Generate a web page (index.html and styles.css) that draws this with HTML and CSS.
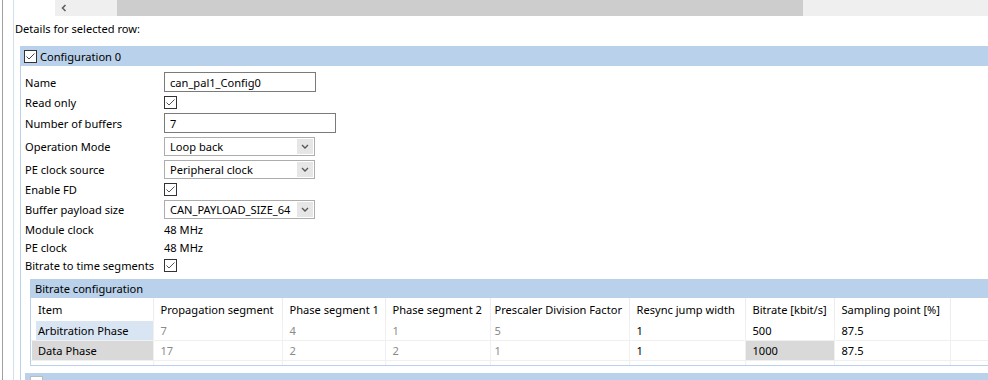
FILE: index.html
```html
<!DOCTYPE html>
<html lang="en">
<head>
    <meta charset="UTF-8">
    <title>Configuration details</title>
    <link rel="stylesheet" href="styles.css">
</head>
<body>
<div class="frame">
    <div class="pane">

        <!-- horizontal scrollbar of the table above -->
        <div class="hscroll">
            <div class="scroll-btn">
                <svg width="8" height="8" viewBox="0 0 8 8"><path d="M5.5 1 L2.5 4 L5.5 7" fill="none" stroke="#606060" stroke-width="1.6"/></svg>
            </div>
            <div class="thumb"></div>
        </div>

        <div class="caption">Details for selected row:</div>

        <div class="group">
            <div class="group-head">
                <svg class="cb" width="13" height="13" viewBox="0 0 13 13"><rect x="0.5" y="0.5" width="12" height="12" fill="#fff" stroke="#333"/><path d="M2.5 6.5 L5 9 L10.5 3.5" fill="none" stroke="#444"/></svg>
                <span>Configuration 0</span>
            </div>
            <div class="group-body">

                <!-- Settings -->
                <div class="form">
                    <div class="row">
                        <label>Name</label>
                        <div class="textbox w152">can_pal1_Config0</div>
                    </div>
                    <div class="row">
                        <label>Read only</label>
                        <svg class="cb" width="13" height="13" viewBox="0 0 13 13"><rect x="0.5" y="0.5" width="12" height="12" fill="#fff" stroke="#333"/><path d="M2.5 6.5 L5 9 L10.5 3.5" fill="none" stroke="#555"/></svg>
                    </div>
                    <div class="row">
                        <label>Number of buffers</label>
                        <div class="textbox w172">7</div>
                    </div>
                    <div class="row">
                        <label>Operation Mode</label>
                        <div class="combo"><span>Loop back</span><span class="drop"><svg width="8" height="5" viewBox="0 0 8 5"><path d="M1 1 L4 4 L7 1" fill="none" stroke="#555" stroke-width="1.3"/></svg></span></div>
                    </div>
                    <div class="row">
                        <label>PE clock source</label>
                        <div class="combo"><span>Peripheral clock</span><span class="drop"><svg width="8" height="5" viewBox="0 0 8 5"><path d="M1 1 L4 4 L7 1" fill="none" stroke="#555" stroke-width="1.3"/></svg></span></div>
                    </div>
                    <div class="row">
                        <label>Enable FD</label>
                        <svg class="cb" width="13" height="13" viewBox="0 0 13 13"><rect x="0.5" y="0.5" width="12" height="12" fill="#fff" stroke="#333"/><path d="M2.5 6.5 L5 9 L10.5 3.5" fill="none" stroke="#555"/></svg>
                    </div>
                    <div class="row">
                        <label>Buffer payload size</label>
                        <div class="combo"><span>CAN_PAYLOAD_SIZE_64</span><span class="drop"><svg width="8" height="5" viewBox="0 0 8 5"><path d="M1 1 L4 4 L7 1" fill="none" stroke="#555" stroke-width="1.3"/></svg></span></div>
                    </div>
                    <div class="row info">
                        <label>Module clock</label>
                        <span>48 MHz</span>
                    </div>
                    <div class="row info">
                        <label>PE clock</label>
                        <span>48 MHz</span>
                    </div>
                    <div class="row">
                        <label>Bitrate to time segments</label>
                        <svg class="cb" width="13" height="13" viewBox="0 0 13 13"><rect x="0.5" y="0.5" width="12" height="12" fill="#fff" stroke="#333"/><path d="M2.5 6.5 L5 9 L10.5 3.5" fill="none" stroke="#555"/></svg>
                    </div>
                </div>

                <!-- Bitrate table -->
                <div class="subgroup">
                    <div class="sub-head">Bitrate configuration</div>
                    <table class="grid">
                        <colgroup>
                            <col style="width:122px">
                            <col style="width:129px">
                            <col style="width:103px">
                            <col style="width:105px">
                            <col style="width:139px">
                            <col style="width:116px">
                            <col style="width:89px">
                            <col style="width:116px">
                            <col>
                        </colgroup>
                        <thead>
                            <tr>
                                <th class="item">Item</th>
                                <th>Propagation segment</th>
                                <th>Phase segment 1</th>
                                <th>Phase segment 2</th>
                                <th class="tight">Prescaler Division Factor</th>
                                <th>Resync jump width</th>
                                <th>Bitrate [kbit/s]</th>
                                <th>Sampling point [%]</th>
                                <th class="fill"></th>
                            </tr>
                        </thead>
                        <tbody>
                            <tr>
                                <td class="item"><span class="hl">Arbitration Phase</span></td>
                                <td class="ro">7</td>
                                <td class="ro">4</td>
                                <td class="ro">1</td>
                                <td class="ro tight">5</td>
                                <td>1</td>
                                <td>500</td>
                                <td>87.5</td>
                                <td class="fill"></td>
                            </tr>
                            <tr>
                                <td class="item"><span class="sel">Data Phase</span></td>
                                <td class="ro">17</td>
                                <td class="ro">2</td>
                                <td class="ro">2</td>
                                <td class="ro tight">1</td>
                                <td>1</td>
                                <td class="cur">1000</td>
                                <td>87.5</td>
                                <td class="fill"></td>
                            </tr>
                            <tr class="stub">
                                <td></td><td></td><td></td><td></td><td></td><td></td><td></td><td></td><td class="fill"></td>
                            </tr>
                        </tbody>
                    </table>
                </div>

                <div class="next-head">
                    <svg class="cb" width="13" height="13" viewBox="0 0 13 13"><rect x="0.5" y="0.5" width="12" height="12" fill="#fff" stroke="#bbb"/></svg>
                    <span>Enable RxFIFO extension</span>
                </div>

            </div>
        </div>
    </div>
</div>
</body>
</html>
```

FILE: styles.css
```css
/* Page */
body {
    margin: 0;
    font-family: "Noto Sans", "Open Sans", sans-serif;
    font-size: 11.1px;
    color: #000;
    background: #fff;
    height: 380px;
    overflow: hidden;
}

.frame {
    margin-left: 2px;
    border-left: 1px solid #a0a0a0;
    padding-left: 10px;
    height: 380px;
}

.pane {
    border-left: 1px solid #cfe0f1;
    height: 100%;
}

/* Scrollbar */
.hscroll {
    margin-left: 41px;
    height: 16px;
    background: #efefef;
    display: flex;
}

.scroll-btn {
    width: 17px;
    display: flex;
    align-items: center;
    justify-content: center;
}

.thumb {
    margin-left: 45px;
    width: 686px;
    background: #cdcdcd;
}

.caption {
    margin-top: 5px;
    padding-left: 1px;
    line-height: 16px;
}

/* Configuration group */
.group {
    margin: 9px 0 0 6px;
    width: 1100px;
}

.group-head {
    height: 20px;
    background: #b9d1ea;
    display: flex;
    align-items: center;
    gap: 3px;
    padding-left: 4px;
}

.cb {
    display: block;
    flex: none;
}

.group-body {
    border-left: 1px solid #b9d1ea;
    padding-left: 4px;
}

.form {
    padding-top: 6px;
}

.row {
    display: flex;
    align-items: center;
    margin-top: 4px;
    height: 13px;
    line-height: 13px;
}

.row:first-child {
    margin-top: 0;
}

.row.info {
    height: 16px;
    margin-top: 2px;
}

.row label {
    width: 139px;
    flex: none;
    white-space: nowrap;
}

.textbox {
    height: 20px;
    flex: none;
    box-sizing: border-box;
    border: 1px solid #7a7a7a;
    padding-left: 5px;
    display: flex;
    align-items: center;
}

.w152 {
    width: 152px;
}

.w172 {
    width: 172px;
}

.combo {
    width: 151px;
    height: 19px;
    flex: none;
    box-sizing: border-box;
    border: 1px solid #adadad;
    padding-left: 5px;
    display: flex;
    align-items: center;
    justify-content: space-between;
    white-space: nowrap;
}

.drop {
    width: 16px;
    height: 15px;
    margin-right: 1px;
    background: #e6e6e6;
    display: flex;
    align-items: center;
    justify-content: center;
}

/* Rows that hold a 20px control */
.row:has(.textbox),
.row:has(.combo) {
    height: 20px;
}

.row:has(.combo) {
    height: 19px;
}

/* Bitrate configuration */
.subgroup {
    margin: 7px 0 0 5px;
    border: 1px solid #b9d1ea;
    border-top: none;
}

.sub-head {
    height: 19px;
    line-height: 19px;
    background: #b9d1ea;
    padding-left: 4px;
}

.grid {
    border-collapse: collapse;
    table-layout: fixed;
    width: 100%;
}

.grid th {
    font-weight: normal;
    text-align: left;
    height: 23px;
    padding: 0 0 0 7px;
    border-right: 1px solid #ececec;
    white-space: nowrap;
    overflow: hidden;
}

.grid td {
    height: 19px;
    padding: 0 0 0 7px;
    border-right: 1px solid #f0f0f0;
    border-bottom: 1px solid #f0f0f0;
    white-space: nowrap;
}

.grid .tight {
    padding-left: 4px;
}

.grid .fill {
    border-right: none;
}

.grid td.ro {
    color: #8a8a8a;
}

.grid td.item {
    padding: 0;
}

.hl,
.sel {
    display: block;
    height: 19px;
    line-height: 19px;
    padding-left: 2px;
    margin-left: 5px;
    background: #d9e5f3;
}

.sel {
    margin-left: 1px;
    padding-left: 6px;
    background: #d9d9d9;
}

.grid td.cur {
    background: #d9d9d9;
}

.grid .stub td {
    height: 4px;
    border-bottom: none;
}

/* Next group, cut off by the window */
.next-head {
    margin-top: 7px;
    height: 20px;
    background: #b9d1ea;
    display: flex;
    align-items: flex-start;
    gap: 2px;
    padding: 3px 0 0 5px;
    color: #8a8a8a;
}
```
